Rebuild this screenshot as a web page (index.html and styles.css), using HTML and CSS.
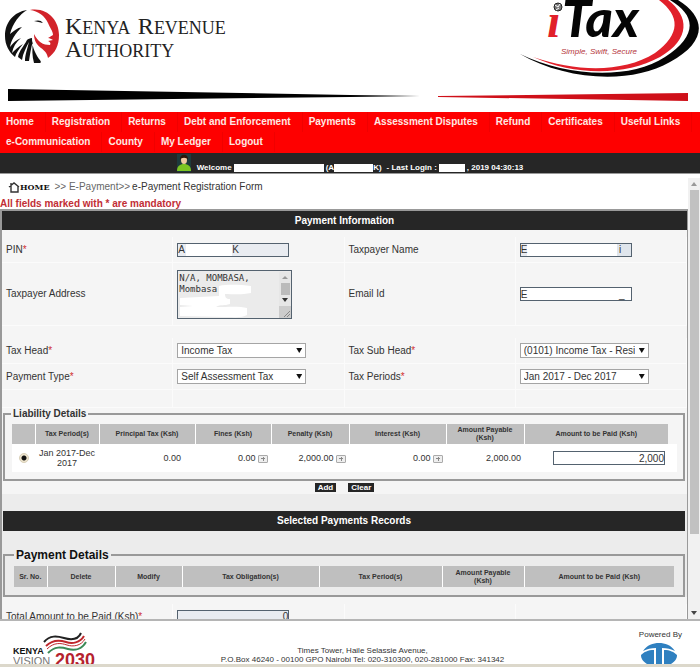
FILE: index.html
```html
<!DOCTYPE html>
<html lang="en">
<head>
<meta charset="utf-8">
<title>iTax - e-Payment Registration Form</title>
<link rel="stylesheet" href="styles.css">
</head>
<body>
<header class="masthead">
  <div class="brands">
    <div class="kra">
      <svg class="lion" viewBox="0 0 54 54" aria-hidden="true">
        <path fill="#111" d="M22 1C9 3 0 13 0 27c0 9 4 16 10 21 1-4 4-8 8-13-5 3-8 6-11 9 1-6 4-11 9-15-5 2-8 5-11 9C6 31 10 25 17 18c-5 1-8 4-12 7C8 14 14 6 22 1z"/>
        <path fill="#111" d="M22 31c-3 6-8 11-9 17l4 3c1-7 4-12 7-18-2 8-4 13-4 19h4c1-7 2-13 4-20-1 8-1 15 1 22h5c3 0 2-2 0-4-5-8-7-13-7-21-2 0-4 1-5 2z"/>
        <path fill="#111" d="M29 12c4-1 7-1 9 2-3-1-6-1-9-2z"/>
        <path fill="#d2232a" d="M25 1c18-3 29 11 29 25 0 11-4 18-11 23-1-5-3-7-7-10-4-3-7-7-7-14 4 8 9 11 16 11 1-2 0-3-2-4l5-1c-2-1-3-2-5-2l5-3c0-4-3-7-5-12C40 7 33 2 25 1z"/>
      </svg>
      <div class="kra-name"><b>K</b>ENYA <b>R</b>EVENUE<br><b>A</b>UTHORITY</div>
    </div>
    <svg class="itax" viewBox="0 0 180 80" role="img" aria-label="iTax - Simple, Swift, Secure">
      <path fill="#050505" d="M0 54C45 80 110 85 150 62C187 42 187 18 158 0H150C177 16 177 36 145 57C110 80 47 77 0 54z"/>
      <path fill="#e1202a" d="M13 57C55 76 105 76 140 57C171 39 169 16 148 0H139C160 16 161 34 135 53C103 73 57 72 13 57z"/>
      <text class="itax-i" x="27" y="37">i</text>
      <text class="itax-tax" x="42" y="37">Tax</text>
      <circle cx="38" cy="7" r="6" fill="#fff"/>
      <circle cx="38" cy="7" r="4" fill="#777" stroke="#222"/>
      <path d="M35 5l3 2 2-3M36 10l3-2" stroke="#fff" fill="none"/>
      <text class="itax-tag" x="41" y="54">Simple, Swift, Secure</text>
    </svg>
  </div>
  <svg class="ribbon" viewBox="0 0 680 12" preserveAspectRatio="none" aria-hidden="true">
    <path fill="#000" d="M0 0L342 6 412 7 342 8 0 12z"/>
    <path fill="#cf1019" d="M430 7L680 4v8L430 8z"/>
  </svg>
</header>
<nav>
  <ul class="menu">
    <li><a href="#">Home</a></li>
    <li><a href="#">Registration</a></li>
    <li><a href="#">Returns</a></li>
    <li><a href="#">Debt and Enforcement</a></li>
    <li><a href="#">Payments</a></li>
    <li><a href="#">Assessment Disputes</a></li>
    <li><a href="#">Refund</a></li>
    <li><a href="#">Certificates</a></li>
    <li><a href="#">Useful Links</a></li>
    <li><a href="#">e-Communication</a></li>
    <li><a href="#">County</a></li>
    <li><a href="#">My Ledger</a></li>
    <li><a href="#">Logout</a></li>
  </ul>
</nav>
<div class="welcome">
  <svg class="avatar" viewBox="0 0 14 18" aria-hidden="true">
    <path fill="#1d3a3c" d="M0 0h14v18H0z"/>
    <path fill="#7cc423" d="M0 17c0-5 3-7 7-7s7 2 7 7z"/>
    <ellipse cx="7" cy="6" rx="3" ry="4" fill="#f0c9a0"/>
    <path fill="#2a1408" d="M3 6c-1-7 9-7 8 0-1-3-7-3-8 0z"/>
  </svg>
  <span>Welcome</span><i class="mask mask-name"></i><span>(A</span><i class="mask mask-pin"></i><span>K)</span>
  <span class="login">- Last Login :</span><i class="mask mask-date"></i><span>, 2019 04:30:13</span>
</div>
<div class="frame">
  <main>
    <div class="crumbs">
      <svg viewBox="0 0 12 12" aria-hidden="true"><path d="M1 6l5-4 5 4M3 5v6h7V5M3 2v3" fill="none" stroke="#333" stroke-width="1.4"/></svg>
      <a class="home" href="#">HOME</a>
      <span class="trail">&gt;&gt; E-Payment&gt;&gt;</span>
      <span>e-Payment Registration Form</span>
    </div>
    <p class="note">All fields marked with * are mandatory</p>
    <form class="panel">
      <h2>Payment Information</h2>
      <div class="fields">
        <label for="pin">PIN<em>*</em></label>
        <div><input id="pin" class="box masked-mid" value="A&nbsp;&nbsp;&nbsp;&nbsp;&nbsp;&nbsp;&nbsp;&nbsp;&nbsp;&nbsp;&nbsp;&nbsp;&nbsp;&nbsp;&nbsp;&nbsp;&nbsp;K" readonly></div>
        <label for="name">Taxpayer Name</label>
        <div><input id="name" class="box masked-long" value="E&nbsp;&nbsp;&nbsp;&nbsp;&nbsp;&nbsp;&nbsp;&nbsp;&nbsp;&nbsp;&nbsp;&nbsp;&nbsp;&nbsp;&nbsp;&nbsp;&nbsp;&nbsp;&nbsp;&nbsp;&nbsp;&nbsp;&nbsp;&nbsp;&nbsp;&nbsp;&nbsp;&nbsp;&nbsp;&nbsp;&nbsp;&nbsp;&nbsp;i" readonly></div>
      </div>
      <div class="fields tall">
        <label for="addr">Taxpayer Address</label>
        <div>
          <div class="area">
            <textarea id="addr" readonly>N/A, MOMBASA,
Mombasa</textarea>
            <svg viewBox="0 0 113 47" aria-hidden="true">
              <path fill="#fff" d="M41 15c10-2 22-1 32 0v7c-9 2-19 1-26 1 0 3 1 5 5 5v5c-6 2-9 0-14 3 12 0 24-1 31 1v7c-5 3-12 2-22 2L2 45V36l13-1-13-1v-7l39-2z"/>
              <path fill="#e6e6e6" d="M101 1h12v34h-12z"/><path fill="#ccc" d="M101 35h12v12h-12z"/>
              <path fill="#999" d="M104 8l3-3 3 3z"/><path fill="#bbb" d="M103 12h9v12h-9z"/>
              <path fill="#333" d="M104 27h6l-3 4z"/><path stroke="#888" d="M106 46l6-6M109 46l3-3"/>
            </svg>
          </div>
        </div>
        <label for="mail">Email Id</label>
        <div><input id="mail" class="box masked-full" value="E&nbsp;&nbsp;&nbsp;&nbsp;&nbsp;&nbsp;&nbsp;&nbsp;&nbsp;&nbsp;&nbsp;&nbsp;&nbsp;&nbsp;&nbsp;&nbsp;&nbsp;&nbsp;&nbsp;&nbsp;&nbsp;&nbsp;&nbsp;&nbsp;&nbsp;&nbsp;&nbsp;&nbsp;&nbsp;&nbsp;&nbsp;&nbsp;&nbsp;_" readonly></div>
      </div>
      <div class="fields">
        <label for="head">Tax Head<em>*</em></label>
        <div><span class="pick"><select id="head"><option>Income Tax</option></select></span></div>
        <label for="sub">Tax Sub Head<em>*</em></label>
        <div><span class="pick"><select id="sub"><option>(0101) Income Tax - Resident</option></select></span></div>
        <label for="type">Payment Type<em>*</em></label>
        <div><span class="pick"><select id="type"><option>Self Assessment Tax</option></select></span></div>
        <label for="period">Tax Periods<em>*</em></label>
        <div><span class="pick"><select id="period"><option>Jan 2017 - Dec 2017</option></select></span></div>
      </div>
      <div class="filler"><span></span><span></span><span></span><span></span></div>
      <fieldset class="liability">
        <legend>Liability Details</legend>
        <table>
          <colgroup><col class="l1"><col class="l2"><col class="l3"><col class="l4"><col class="l5"><col class="l6"><col class="l7"><col><col class="l9"></colgroup>
          <thead><tr><th></th><th>Tax Period(s)</th><th>Principal Tax (Ksh)</th><th>Fines (Ksh)</th><th>Penalty (Ksh)</th><th>Interest (Ksh)</th><th>Amount Payable (Ksh)</th><th>Amount to be Paid (Ksh)</th><td></td></tr></thead>
          <tbody><tr>
            <td class="mid"><input type="radio" name="row" checked aria-label="Jan 2017-Dec 2017"></td>
            <td class="mid">Jan 2017-Dec 2017</td>
            <td class="pad">0.00</td>
            <td>0.00 <button type="button" class="plus" aria-label="Fines details"></button></td>
            <td>2,000.00 <button type="button" class="plus" aria-label="Penalty details"></button></td>
            <td>0.00 <button type="button" class="plus" aria-label="Interest details"></button></td>
            <td>2,000.00</td>
            <td><input class="box amount" value="2,000" aria-label="Amount to be Paid (Ksh)"></td>
            <td></td>
          </tr></tbody>
        </table>
      </fieldset>
      <div class="actions"><button type="button">Add</button><button type="button">Clear</button></div>
      <section class="records">
        <h2>Selected Payments Records</h2>
        <fieldset class="details">
          <legend>Payment Details</legend>
          <table>
            <colgroup><col class="d1"><col class="d2"><col class="d3"><col class="d4"><col class="d5"><col class="d6"><col></colgroup>
            <thead><tr><th>Sr. No.</th><th>Delete</th><th>Modify</th><th>Tax Obligation(s)</th><th>Tax Period(s)</th><th>Amount Payable (Ksh)</th><th>Amount to be Paid (Ksh)</th></tr></thead>
          </table>
        </fieldset>
      </section>
      <div class="fields total">
        <label for="total">Total Amount to be Paid (Ksh)<em>*</em></label>
        <div><input id="total" class="box sum" value="0" readonly></div>
        <span></span><span></span>
      </div>
    </form>
  </main>
  <div class="scroll" aria-hidden="true"><i class="up"></i><i class="thumb"></i><i class="down"></i></div>
</div>
<footer>
  <svg class="vision" viewBox="0 0 84 32" role="img" aria-label="Kenya Vision 2030">
    <g fill="none" stroke-width="2">
      <path stroke="#222" d="M31 10c6-7 13-6 20-4s14 2 17-5"/>
      <path stroke="#c0282d" d="M33 14c7-7 14-6 20-4s14 1 18-6"/>
      <path stroke="#c0282d" stroke-width="1" d="M34 17c7-7 14-6 20-4s14 1 18-6"/>
      <path stroke="#3b8a57" d="M35 21c7-7 13-6 20-4s14 0 18-7"/>
    </g>
    <text class="v-kenya" x="0" y="22">KENYA</text>
    <text class="v-vision" x="0" y="33">VISION</text>
    <text class="v-year" x="42" y="34">2030</text>
  </svg>
  <address>Times Tower, Haile Selassie Avenue,<br>P.O.Box 46240 - 00100 GPO Nairobi Tel: 020-310300, 020-281000 Fax: 341342</address>
  <div class="powered">
    <span>Powered By</span>
    <svg viewBox="0 0 36 21" aria-hidden="true">
      <path fill="#2f80c0" d="M2 8C6 2 12 0 18 0s12 2 16 8c-4-2-8-3-13-3v16h-1V5h-4v16h-1V5C10 5 6 6 2 8z"/>
      <path fill="#2f80c0" d="M0 12c3-3 7-5 13-5v14H6c-4-3-6-5-6-9zM36 12c-3-3-7-5-13-5v14h7c4-3 6-5 6-9zM15 5h6v16h-6z"/>
      <path stroke="#fff" stroke-width="2" d="M14 6v15M22 6v15"/>
    </svg>
  </div>
</footer>
</body>
</html>
```

FILE: styles.css
```css
* { box-sizing: border-box; }
body {
  margin: 0;
  height: 100vh;
  display: flex;
  flex-direction: column;
  overflow: hidden;
  background: #fff;
  color: #333;
  font: 10px/12px "Liberation Sans", Arial, sans-serif;
}
input, select, textarea, button { font: inherit; color: inherit; margin: 0; }
a { color: inherit; text-decoration: none; }

.masthead { height: 112px; flex: none; }
.brands { display: flex; justify-content: space-between; height: 89px; }
.kra { display: flex; padding: 9px 0 0 5px; gap: 6px; }
.lion { width: 54px; height: 54px; }
.kra-name {
  padding-top: 7px;
  font-family: "Liberation Serif", serif;
  font-size: 18px;
  line-height: 22px;
  color: #222;
  white-space: nowrap;
}
.kra-name b { font-size: 24px; font-weight: 400; line-height: 20px; }
.kra-name b + b { margin-left: 4px; }
.kra-name br + b { margin-left: 0; }
.itax { width: 180px; height: 80px; }
.itax-i { font: italic bold 48px "Liberation Serif", serif; fill: #e1202a; }
.itax-tax { font: italic 900 52px Lato, sans-serif; fill: #050505; }
.itax-tag { font: italic 8px "Liberation Sans", sans-serif; fill: #b5353c; }
.ribbon { display: block; width: calc(100% - 20px); height: 12px; margin-left: 8px; }

nav { background: #fe0000; flex: none; }
.menu { display: flex; flex-wrap: wrap; list-style: none; margin: 0; padding: 0 0 1px; }
.menu li { padding: 0 11px 0 6px; line-height: 20px; border-right: 1px solid #f00000; }
.menu a { color: #ffe9e4; font-weight: 700; }

.welcome {
  flex: none;
  display: flex;
  justify-content: center;
  align-items: flex-end;
  height: 21px;
  padding-bottom: 1px;
  background: #262626;
  border-bottom: 1px solid #999;
  color: #fff;
  font-size: 8px;
  font-weight: 700;
  line-height: 9px;
  white-space: nowrap;
}
.avatar { width: 14px; height: 18px; margin-right: 6px; }
.mask { height: 8px; background: #fff; margin: 0 2px; }
.mask-name { width: 90px; }
.mask-pin { width: 39px; margin: 0; }
.login { margin-left: 5px; }
.mask-date { width: 26px; }

.frame { flex: 1; min-height: 0; display: flex; border-bottom: 2px solid #b5b5b5; }
main { flex: 1; min-width: 0; overflow: hidden; }
.scroll { width: 12px; display: flex; flex-direction: column; align-items: center; background: #f1f1f1; margin-top: 4px; }
.scroll .up, .scroll .down { width: 6px; height: 4px; background: #999; clip-path: polygon(50% 0, 100% 100%, 0 100%); margin: 4px 0; }
.scroll .down { background: #444; clip-path: polygon(0 0, 100% 0, 50% 100%); margin-top: auto; }
.scroll .thumb { width: 9px; height: 78%; background: #c1c1c1; }

.crumbs { display: flex; align-items: center; height: 24px; padding: 1px 0 0 8px; white-space: nowrap; }
.crumbs svg { width: 12px; height: 12px; }
.home { font: bold 8px "DejaVu Serif", serif; color: #111; margin-right: 5px; }
.trail { color: #666; margin-right: 2px; }
.note { margin: 0; height: 11px; line-height: 11px; color: #c22e35; font-weight: 700; }

.panel { border: 2px solid #999; border-width: 2px 1px 0 2px; background: #f5f5f5; }
h2 { margin: 0; background: #262626; color: #fff; font-size: 10px; line-height: 19px; text-align: center; }
.fields, .filler { display: grid; grid-template-columns: repeat(4, 1fr); }
.fields { grid-auto-rows: 26px; padding-top: 7px; }
.fields > *, .filler > * { display: flex; align-items: center; padding-left: 4px; border: 1px solid #fbfbfb; border-width: 0 1px 1px 0; }
.tall { grid-auto-rows: 63px; padding-top: 0; }
.tall + .fields { padding-top: 12px; }
em { color: #d03030; font-style: normal; }
.filler { height: 18px; }

.box { width: 112px; height: 14px; padding: 0; border: 1px solid #54626f; border-radius: 0; background: #e9ecf1; font-size: 10px; }
.masked-mid { background: linear-gradient(90deg, #e9ecf1 8px, #fff 8px, #fff 54px, #e9ecf1 54px); }
.masked-long { background: linear-gradient(90deg, #e9ecf1 6px, #fff 6px, #fff 96px, #dfe5ec 96px); }
.masked-full { background: #fff; }
.area { position: relative; width: 115px; height: 49px; border: 1px solid #54626f; }
.area textarea {
  display: block; width: 100%; height: 100%; padding: 2px 1px; border: 0; resize: none; overflow: hidden;
  background: #ebebeb; font: 9px/11px "DejaVu Sans Mono", monospace;
}
.area svg { position: absolute; inset: 0; pointer-events: none; }
.pick { position: relative; width: 129px; }
.pick::after {
  content: ""; position: absolute; right: 4px; top: 5px; width: 6px; height: 5px;
  background: #111; clip-path: polygon(0 0, 100% 0, 50% 100%); pointer-events: none;
}
select { appearance: none; display: block; width: 100%; height: 15px; padding: 0 13px 0 3px; border: 1px solid #a5a5a5; border-radius: 0; background: #fff; overflow: hidden; }

fieldset { margin: 0 2px 0 1px; border: 2px solid #999; min-width: 0; }
legend { font-weight: 700; padding: 0 2px; }
table { width: 100%; border-collapse: collapse; table-layout: fixed; }
th { height: 21px; padding: 0 5px; background: #bfbfbf; border-left: 1px solid #fff; font-size: 7px; line-height: 8px; }
th:first-child { border-left: 0; }
tbody td { height: 28px; }
td { padding: 0 3px; text-align: right; font-size: 9px; line-height: 10px; white-space: nowrap; }
.liability { padding: 4px 6px 7px 7px; }
.liability legend { margin-left: -1px; }
.liability th { height: 20px; }
.liability tbody { background: #fff; }
td.mid { text-align: center; white-space: normal; }
td.pad { padding-right: 14px; }
.liability .amount { background: #fff; text-align: right; }
.l1 { width: 23px; } .l2 { width: 64px; } .l3 { width: 96px; } .l4 { width: 76px; }
.l5 { width: 78px; } .l6 { width: 97px; } .l7 { width: 78px; } .l9 { width: 9px; }
input[type="radio"] {
  appearance: none; width: 10px; height: 10px; border-radius: 50%; vertical-align: middle;
  border: 1px solid #d8cfb8; background: radial-gradient(#111 0 2px, #efe6cf 3px);
}
.plus {
  width: 10px; height: 8px; padding: 0; border: 1px solid #aaa; border-radius: 1px; vertical-align: middle;
  background: linear-gradient(#888, #888) center / 4px 1px no-repeat, linear-gradient(#888, #888) center / 1px 4px no-repeat, #eee;
}
.actions { display: flex; justify-content: center; gap: 12px; padding: 2px 0; }
.actions button { height: 9px; padding: 0 3px; border: 0; background: #262626; color: #fff; font-size: 8px; font-weight: 700; line-height: 9px; }
.records { padding: 17px 0 0; background: #ececec; }
.records h2 { margin: 0 2px 0 1px; line-height: 20px; }
.details { margin-top: 17px; padding: 4px 9px 8px; }
.details legend { font-size: 12px; line-height: 14px; color: #111; }
.d1 { width: 33px; } .d2 { width: 68px; } .d3 { width: 67px; } .d4 { width: 137px; }
.d5 { width: 123px; } .d6 { width: 82px; }
.total .sum { text-align: right; }

footer {
  flex: none; display: grid; grid-template-columns: 84px 1fr 54px; align-items: end; gap: 12px;
  height: 46px; padding: 0 18px 0 13px; overflow: hidden; border-bottom: 3px solid #dcd8cb;
}
.vision { width: 84px; height: 32px; }
.v-kenya { font: bold 9px "Liberation Sans", sans-serif; fill: #111; }
.v-vision { font: 11px "Liberation Sans", sans-serif; fill: #777; }
.v-year { font: bold 18px "Liberation Sans", sans-serif; fill: #b5222e; }
address { font-style: normal; font-size: 8px; line-height: 9px; text-align: center; }
.powered { display: flex; flex-direction: column; align-items: flex-end; gap: 3px; font-size: 8px; line-height: 10px; white-space: nowrap; }
.powered svg { width: 36px; height: 21px; margin-right: 5px; }
```
